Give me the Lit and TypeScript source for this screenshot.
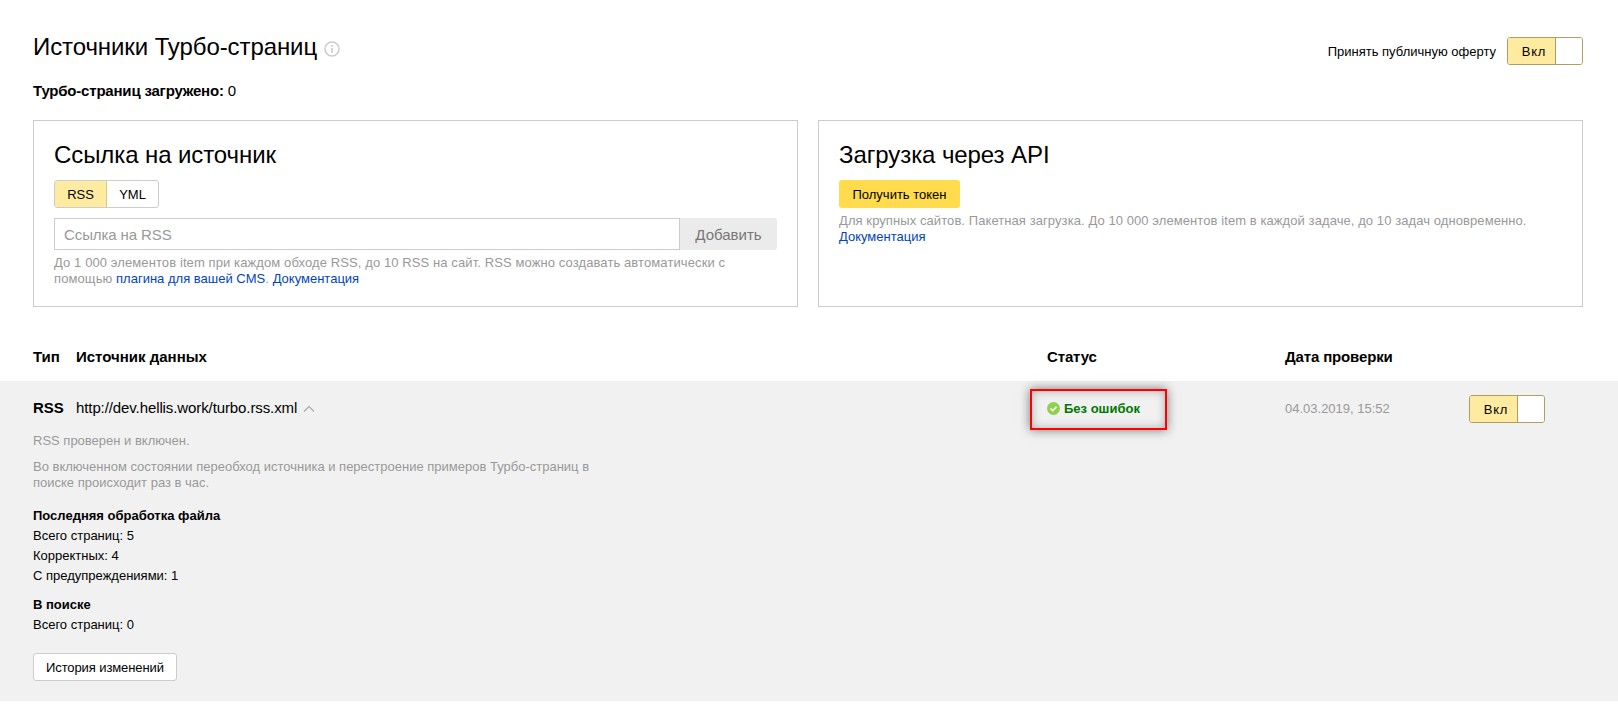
import { LitElement, html, css } from "lit";
import { customElement } from "lit/decorators.js";

@customElement("app-toggle")
class AppToggle extends LitElement {
  static styles = css`
    :host { display: inline-flex; width: 76px; height: 28px; box-sizing: border-box; border: 1px solid #ad9f63; border-radius: 3px; overflow: hidden; font-size: 13px; color: #000; }
    .on { width: 48px; box-sizing: border-box; padding-left: 5px; background: #ffeba0; display: flex; align-items: center; justify-content: center; letter-spacing: 0.8px; border-right: 1px solid #ad9f63; }
    .off { flex: 1; background: #fff; }
  `;
  render() {
    return html`<div class="on">Вкл</div><div class="off"></div>`;
  }
}

@customElement("app-root")
class AppRoot extends LitElement {
  static styles = css`
    :host { display: block; font-family: "Liberation Sans", Arial, sans-serif; color: #000; background: #fff; min-height: 720px; font-size: 13px; }
    a { color: #04b; text-decoration: none; }
    .top { padding: 0 35px 0 33px; }
    .head { display: flex; align-items: center; justify-content: space-between; height: 94px; box-sizing: border-box; }
    .title { display: flex; align-items: center; gap: 7px; font-size: 24px; font-weight: 400; margin: 0; letter-spacing: -0.09px; }
    .info { display: block; margin-top: 3px; }
    .offer { display: flex; align-items: center; gap: 11px; font-size: 13px; margin-top: 8px; }
    .loaded { font-size: 15px; line-height: 16px; margin-top: -11px; height: 37px; letter-spacing: -0.2px; }
    .cards { display: grid; grid-template-columns: 765px 765px; gap: 20px; }
    .card { height: 187px; box-sizing: border-box; border: 1px solid #ccc; padding: 20px 20px 0 20px; }
    .card h2 { font-size: 24px; font-weight: 400; margin: 0; line-height: 28px; letter-spacing: -0.09px; }
    .tabs { display: inline-flex; height: 28px; margin-top: 11px; box-sizing: border-box; border: 1px solid #ccc; border-radius: 3px; overflow: hidden; font-size: 13px; }
    .tabs div { display: flex; align-items: center; justify-content: center; width: 51px; }
    .tabs .act { background: #ffeba0; border-right: 1px solid #d9c98a; }
    .form { display: flex; height: 32px; margin-top: 10px; }
    .input { flex: 1; box-sizing: border-box; border: 1px solid #ccc; padding-left: 9px; display: flex; align-items: center; font-size: 15px; letter-spacing: -0.1px; color: #999; }
    .add { width: 97px; background: #ebebeb; border-radius: 0 3px 3px 0; color: #777; font-size: 15px; display: flex; align-items: center; justify-content: center; }
    .hint { color: #999; font-size: 13px; line-height: 16px; margin-top: 5px; letter-spacing: 0.1px; }
    .hint a { letter-spacing: 0; }
    .token { display: inline-flex; align-items: center; height: 28px; padding: 0 13.5px; background: #ffdb4d; border-radius: 3px; font-size: 13px; margin-top: 11px; }
    .hint.api { margin-top: 5px; letter-spacing: 0.08px; }
    .thead { display: flex; align-items: flex-start; height: 74px; box-sizing: border-box; padding: 42px 0 0 33px; font-size: 15px; line-height: 16px; font-weight: 700; }
    .c-type { width: 43px; flex: none; }
    .c-src { width: 971px; flex: none; }
    .c-status { width: 238px; flex: none; }
    .tight { letter-spacing: -0.15px; }
    .row { background: #f1f1f1; height: 320px; box-sizing: border-box; padding: 0 0 0 33px; position: relative; }
    .rowhead { display: flex; align-items: center; height: 52px; box-sizing: border-box; padding-top: 2px; }
    .rowhead app-toggle { margin-top: 2px; }
    .rss { font-weight: 700; font-size: 15px; margin-top: -2px; }
    .url { font-size: 15px; display: flex; align-items: center; gap: 6px; letter-spacing: -0.1px; margin-top: -2px; }
    .chev { margin-top: 3px; }
    .status { display: flex; align-items: center; gap: 4px; color: #070; font-weight: 700; font-size: 13px; }
    .date { color: #999; font-size: 13px; width: 184px; flex: none; }
    .mark { position: absolute; left: 1030px; top: 8px; width: 137px; height: 41px; box-sizing: border-box; border: 2px solid #f00; box-shadow: 0 0 10px rgba(0,0,0,.5), inset 0 0 10px rgba(0,0,0,.28); }
    .desc { width: 560px; color: #999; font-size: 13px; line-height: 16px; }
    .desc p { margin: 0 0 10px; }
    .stats { margin-top: 15px; font-size: 13px; line-height: 20px; }
    .stats b { display: block; }
    .group + .group { margin-top: 9px; }
    .hist { display: flex; width: fit-content; align-items: center; height: 28px; padding: 0 12px; margin-top: 18px; background: #fff; border: 1px solid #ccc; border-radius: 3px; font-size: 13px; box-sizing: border-box; letter-spacing: -0.1px; }
  `;
  render() {
    return html`
      <div class="top">
        <div class="head">
          <h1 class="title">Источники Турбо-страниц
            <svg class="info" width="16" height="16" viewBox="0 0 16 16"><circle cx="8" cy="8" r="7" fill="none" stroke="#ccc" stroke-width="1.5"/><rect x="7.2" y="7" width="1.6" height="5" fill="#ccc"/><rect x="7.2" y="4" width="1.6" height="1.7" fill="#ccc"/></svg>
          </h1>
          <div class="offer">Принять публичную оферту <app-toggle></app-toggle></div>
        </div>
        <div class="loaded"><b>Турбо-страниц загружено:</b> 0</div>
        <div class="cards">
          <div class="card">
            <h2>Ссылка на источник</h2>
            <div class="tabs"><div class="act">RSS</div><div>YML</div></div>
            <div class="form"><div class="input">Ссылка на RSS</div><div class="add">Добавить</div></div>
            <div class="hint"><div>До 1 000 элементов item при каждом обходе RSS, до 10 RSS на сайт. RSS можно создавать автоматически с</div><div><span>помощью</span> <a>плагина для вашей CMS</a><span>.</span> <a>Документация</a></div></div>
          </div>
          <div class="card">
            <h2>Загрузка через API</h2>
            <div class="token">Получить токен</div>
            <div class="hint api"><div>Для крупных сайтов. Пакетная загрузка. До 10 000 элементов item в каждой задаче, до 10 задач одновременно.</div><a>Документация</a></div>
          </div>
        </div>
      </div>
      <div class="thead">
        <div class="c-type">Тип</div><div class="c-src">Источник данных</div><div class="c-status tight">Статус</div><div class="tight">Дата проверки</div>
      </div>
      <div class="row">
        <div class="rowhead">
          <div class="c-type rss">RSS</div>
          <div class="c-src url">http://dev.hellis.work/turbo.rss.xml
            <svg class="chev" width="12" height="7" viewBox="0 0 12 7"><path d="M1 6.5l5-5 5 5" fill="none" stroke="#aaa" stroke-width="1.2"/></svg>
          </div>
          <div class="c-status status">
            <svg width="13" height="13" viewBox="0 0 13 13"><circle cx="6.5" cy="6.5" r="6.5" fill="#8fd14f"/><path d="M3.5 6.5l2.2 2.2 3.8-4" fill="none" stroke="#fff" stroke-width="1.6"/></svg>
            Без ошибок
          </div>
          <div class="date">04.03.2019, 15:52</div>
          <app-toggle></app-toggle>
        </div>
        <div class="mark"></div>
        <div class="desc">
          <p>RSS проверен и включен.</p>
          <p>Во включенном состоянии переобход источника и перестроение примеров Турбо-страниц в поиске происходит раз в час.</p>
        </div>
        <div class="stats">
          <div class="group"><b>Последняя обработка файла</b><div>Всего страниц: 5</div><div>Корректных: 4</div><div>С предупреждениями: 1</div></div>
          <div class="group"><b>В поиске</b><div>Всего страниц: 0</div></div>
        </div>
        <div class="hist">История изменений</div>
      </div>
    `;
  }
}
